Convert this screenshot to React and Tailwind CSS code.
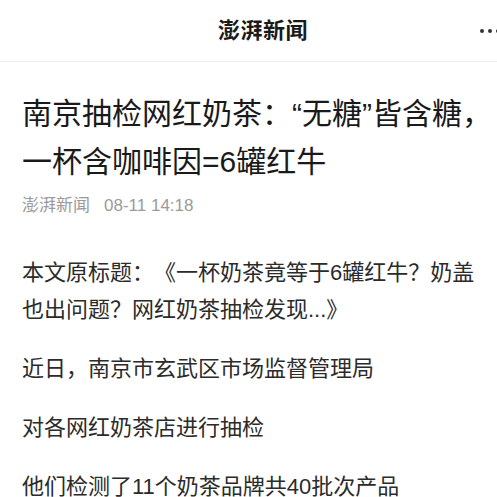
export default function App() {
    const paragraphs = [
        "近日，南京市玄武区市场监督管理局",
        "对各网红奶茶店进行抽检",
        "他们检测了11个奶茶品牌共40批次产品",
    ];

    return (
        <div
            className="w-[497px] h-[497px] overflow-hidden bg-white [text-spacing-trim:space-all]"
            style={{ fontFamily: '"Liberation Sans", "Noto Sans CJK SC", sans-serif' }}
        >
            <div className="w-[526px]">
                {/* 顶部栏 */}
                <div className="relative h-[62px] flex items-center justify-center border-b border-[#ededed]">
                    <span className="text-[22px] font-bold text-[#1a1a1a] tracking-[0.5px]">澎湃新闻</span>
                    <div className="absolute right-[26px] top-1/2 -translate-y-1/2 flex items-center gap-[4px]">
                        <span className="w-[4px] h-[4px] rounded-full bg-[#333]" />
                        <span className="w-[4px] h-[4px] rounded-full bg-[#333]" />
                        <span className="w-[4px] h-[4px] rounded-full bg-[#333]" />
                    </div>
                </div>

                {/* 正文 */}
                <div className="px-[22px] pt-[28px]">
                    <h1 className="text-[30px] leading-[48px] font-normal text-[#1a1a1a] whitespace-nowrap">
                        南京抽检网红奶茶：“无糖”皆含糖，<br />一杯含咖啡因=6罐红牛
                    </h1>

                    <div className="mt-[8px] flex items-center gap-[14px] text-[17px] leading-[24px] text-[#9b9b9b]">
                        <span>澎湃新闻</span>
                        <span>08-11 14:18</span>
                    </div>

                    <div className="mt-[36px] text-[22px] leading-[37px] text-[#2b2b2b]">
                        <p className="whitespace-nowrap">
                            本文原标题：《一杯奶茶竟等于6罐红牛？奶盖<br />也出问题？网红奶茶抽检发现...》
                        </p>
                        {paragraphs.map((p) => (
                            <p key={p} className="mt-[22px]">{p}</p>
                        ))}
                    </div>
                </div>
            </div>
        </div>
    );
}
